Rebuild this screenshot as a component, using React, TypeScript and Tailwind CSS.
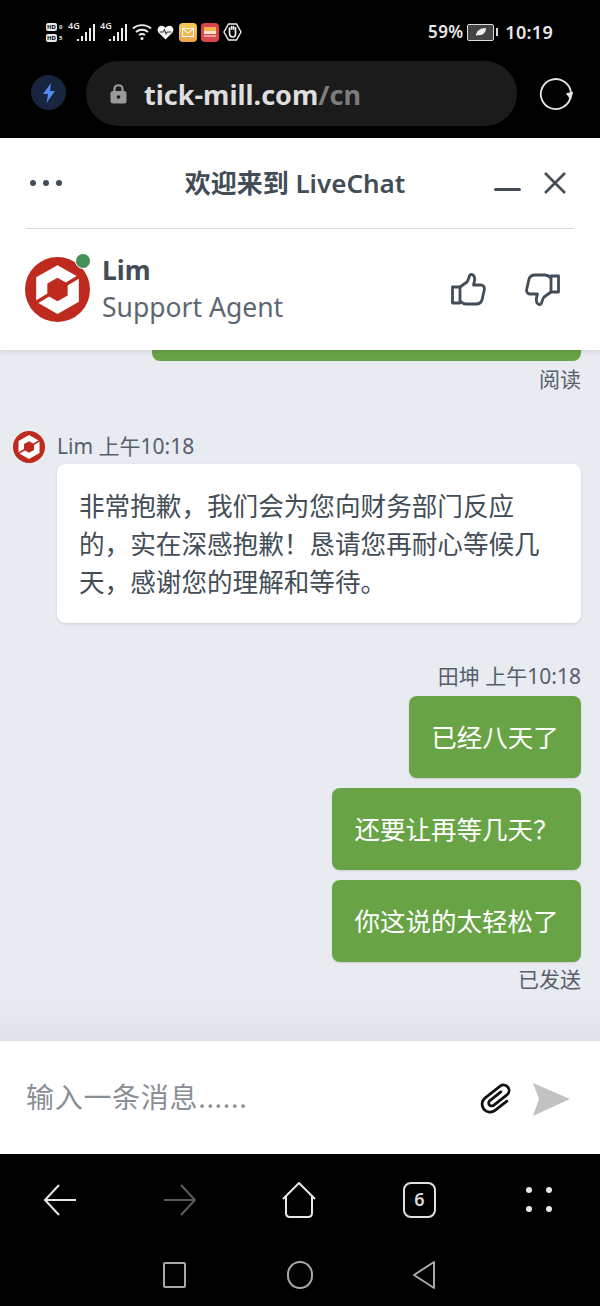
const cjk = "font-['Noto_Sans','Noto_Sans_CJK_SC',sans-serif]"

function Logo({ size }: { size: number }) {
  return (
    <svg width={size} height={size} viewBox="0 0 64 64">
      <circle cx="32" cy="32" r="32" fill="#bf2a1e" />
      <path d="M32 8 L53 20 L53 44 L32 56 L11 44 L11 20 Z" fill="#fff" />
      <path d="M32 20.5 L42 26.2 L42 37.8 L32 43.5 L22 37.8 L22 26.2 Z" fill="#bf2a1e" />
      <path d="M7 47 L32 32 L57 17" fill="none" stroke="#bf2a1e" strokeWidth="3.2" />
    </svg>
  )
}

function HdRow({ n }: { n: string }) {
  return (
    <div className="flex items-center gap-[2px]">
      <span className="flex h-[8px] w-[11px] items-center justify-center rounded-[2px] bg-[#e8e8e8] text-[6px] font-bold leading-none text-black">HD</span>
      <span className="text-[6px] font-bold leading-none">{n}</span>
    </div>
  )
}

function Signal({ className }: { className: string }) {
  return (
    <div className={`relative flex h-[18px] items-end gap-[2px] pl-[9px] ${className}`}>
      <span className="absolute left-0 top-[-2px] text-[9px] font-semibold leading-[10px]">4G</span>
      <div className="h-[2px] w-[2px] bg-[#eee]" />
      <div className="h-[5px] w-[2px] bg-[#eee]" />
      <div className="h-[9px] w-[2px] bg-[#eee]" />
      <div className="h-[13px] w-[2px] bg-[#eee]" />
      <div className="h-[17px] w-[2px] bg-[#eee]" />
    </div>
  )
}

function StatusBar() {
  return (
    <div className="flex h-[61px] items-center justify-between pl-[46px] pr-[47px] pt-[3px] text-[#e8e8e8]">
      <div className="flex items-center">
        <div className="flex w-[19px] flex-col gap-[3px]">
          <HdRow n="0" />
          <HdRow n="5" />
        </div>
        <Signal className="ml-[3px]" />
        <Signal className="ml-[5px]" />
        <svg className="ml-[5px]" width="20" height="18" viewBox="0 0 20 18" fill="none" stroke="#f0f0f0" strokeWidth="1.9">
          <path d="M1 5.5 C6 1 14 1 19 5.5" />
          <path d="M4 9 C7.5 6 12.5 6 16 9" />
          <path d="M7 12 C8.7 10.8 11.3 10.8 13 12" />
          <circle cx="10" cy="15.5" r="1.5" fill="#f0f0f0" stroke="none" />
        </svg>
        <svg className="ml-[5px]" width="17" height="15" viewBox="0 0 18 16">
          <path d="M9 15.5 L1.5 8 C-1 4 2 0.5 5 0.8 C7 1 8 2 9 3 C10 2 11 1 13 0.8 C16 0.5 19 4 16.5 8 Z" fill="#f5f5f5" />
          <path d="M3 7.5 H6.5 L8 5 L9.5 9.5 L11 7.5 H15" fill="none" stroke="#333" strokeWidth="1.1" />
        </svg>
        <div className="ml-[5px] flex h-[19px] w-[18px] items-center justify-center rounded-[4px] bg-gradient-to-b from-[#f5cf55] to-[#e9a64c]">
          <svg width="12" height="9" viewBox="0 0 12 9" fill="none" stroke="#fff" strokeWidth="1">
            <rect x="0.5" y="0.5" width="11" height="8" />
            <path d="M0.5 1 L6 5 L11.5 1" />
          </svg>
        </div>
        <div className="ml-[4px] flex h-[19px] w-[18px] flex-col justify-center rounded-[4px] bg-[#d9474d] px-[3px]">
          <div className="h-[4px] bg-[#f6b352]" />
          <div className="h-[3px] bg-[#fbe6c8]" />
          <div className="mt-[1px] h-[2px] bg-[#f0a09c]" />
        </div>
        <svg className="ml-[4px]" width="19" height="18" viewBox="0 0 19 18">
          <path d="M5.5 1 H13.5 L18 9 L13.5 17 H5.5 L1 9 Z" fill="none" stroke="#f0f0f0" strokeWidth="1.4" />
          <path d="M6.5 7 V5 M8.5 6 V3.7 M10.5 6 V3.7 M12.5 7 V4.7 M6.5 7 V10 C6.5 13 8 14 10 14 C12 14 13 12 12.5 9 V7" fill="none" stroke="#f0f0f0" strokeWidth="1.7" strokeLinecap="round" />
        </svg>
      </div>
      <div className={`flex items-center text-[17px] font-semibold tracking-[0.3px] ${cjk}`}>
        <span>59%</span>
        <div className="ml-[4px] flex h-[17px] w-[27px] items-center justify-center rounded-[2px] border-[1.5px] border-[#dcdcdc] bg-[#444]">
          <svg width="12" height="10" viewBox="0 0 12 10">
            <path d="M1 9 C1 4 5 1 11 1 C11 6 7 9 3 8 Z" fill="#eee" />
          </svg>
        </div>
        <div className="ml-[2px] h-[8px] w-[2px] bg-[#dcdcdc]" />
        <span className="ml-[7px] text-[18px]">10:19</span>
      </div>
    </div>
  )
}

function UrlBar() {
  return (
    <div className="flex h-[77px] items-start">
      <div className="ml-[31px] mt-[14px] flex h-[35px] w-[35px] items-center justify-center rounded-full bg-[#17253f]">
        <svg width="14" height="20" viewBox="0 0 14 20">
          <path d="M9 0 L1 11 H6 L4.5 20 L13 8 H8 Z" fill="#4f8bf0" />
        </svg>
      </div>
      <div className="ml-[20px] flex h-[65px] w-[431px] items-center rounded-full bg-[#1b1b1b] pl-[24px]">
        <svg width="17" height="21" viewBox="0 0 17 21">
          <path d="M4.5 9 V6 C4.5 1 12.5 1 12.5 6 V9" fill="none" stroke="#9a9a9a" strokeWidth="2.2" />
          <rect x="0.5" y="8" width="16" height="12.5" rx="2.5" fill="#9a9a9a" />
          <circle cx="8.5" cy="14" r="1.8" fill="#1b1b1b" />
        </svg>
        <div className="ml-[17px] mt-[2px] text-[27px] font-bold leading-none text-[#dedede]">
          tick-mill.com<span className="text-[#7c7c7c]">/cn</span>
        </div>
      </div>
      <svg className="ml-[22px] mt-[16px]" width="34" height="34" viewBox="0 0 34 34" fill="none" stroke="#e6e6e6" strokeWidth="1.8">
        <path d="M31.5 20 A15 15 0 1 1 25 4.5 C29 7 31.5 11 32 16" />
        <path d="M28.5 17 L33 16 L31.5 21 Z" fill="#e6e6e6" />
      </svg>
    </div>
  )
}

function Header() {
  return (
    <div className="relative z-10 bg-white px-[26px] shadow-[0_1px_6px_rgba(0,0,0,0.12)]">
      <div className="flex h-[91px] items-center justify-between border-b border-[#d5d7da] pb-[1px]">
        <div className="ml-[4px] flex w-[32px] justify-between">
          <div className="h-[6px] w-[6px] rounded-full bg-[#424d57]" />
          <div className="h-[6px] w-[6px] rounded-full bg-[#424d57]" />
          <div className="h-[6px] w-[6px] rounded-full bg-[#424d57]" />
        </div>
        <div className="ml-[34px] mt-[1px] text-[26px] font-semibold text-[#424d57]">欢迎来到 LiveChat</div>
        <div className="flex items-center">
          <div className="mt-[14px] h-[3px] w-[27px] rounded-[2px] bg-[#424d57]" />
          <svg className="ml-[22px] mr-[7px]" width="24" height="24" viewBox="0 0 24 24" fill="none" stroke="#424d57" strokeWidth="2.6">
            <path d="M2 2 L22 22 M22 2 L2 22" />
          </svg>
        </div>
      </div>
      <div className="flex h-[121px] items-center">
        <div className="relative ml-[-1px] mt-[-1px]">
          <Logo size={65} />
          <div className="absolute right-[-1px] top-[-4px] h-[16px] w-[16px] rounded-full border border-white bg-[#44905a]" />
        </div>
        <div className="ml-[12px] mt-[-2px]">
          <div className="text-[26.5px] font-bold leading-[37px] text-[#424d57]">Lim</div>
          <div className="text-[26.5px] leading-[37px] text-[#5d6772]">Support Agent</div>
        </div>
        <div className="ml-auto flex items-center gap-[39px] pr-[14px]">
          <svg width="35" height="33" viewBox="0 0 35 33" fill="none" stroke="#424d57" strokeWidth="2.8" strokeLinejoin="round">
            <path d="M1.5 14 H9 V30 H1.5 Z" />
            <path d="M9 14 L16 9 C18 6 18 3 19 2 C22 0 25 4 23 10 L22.5 12 H30 C33 12 34 15 33 18 L31 27 C30 30 28 31 25 31 H15 C12 31 11 30 9 28" />
          </svg>
          <svg width="35" height="33" viewBox="0 0 35 33" fill="none" stroke="#424d57" strokeWidth="2.8" strokeLinejoin="round">
            <path d="M33.5 19 H26 V3 H33.5 Z" />
            <path d="M26 19 L19 24 C17 27 17 30 16 31 C13 33 10 29 12 23 L12.5 21 H5 C2 21 1 18 2 15 L4 6 C5 3 7 2 10 2 H20 C23 2 24 3 26 5" />
          </svg>
        </div>
      </div>
    </div>
  )
}

function Bubble({ text, width, mt }: { text: string; width: string; mt: string }) {
  return (
    <div className={`flex h-[82px] items-center justify-center rounded-[8px] bg-[#68a445] pt-[1px] text-[25.5px] text-white shadow-[0_1px_2px_rgba(0,0,0,0.12)] ${width} ${mt}`}>
      {text}
    </div>
  )
}

function Chat() {
  return (
    <div className="relative flex h-[691px] flex-col items-stretch overflow-hidden bg-[#e8ebf0] pl-[13px] pr-[19px]">
      <div className="ml-auto h-[11px] w-[429px] rounded-b-[8px] bg-[#68a445]" />
      <div className="mt-[5px] text-right text-[21px] leading-[27px] text-[#56606b]">阅读</div>
      <div className="mt-[37px] flex h-[34px] items-center">
        <Logo size={32} />
        <span className="ml-[12px] text-[21px] text-[#56606b]">Lim 上午10:18</span>
      </div>
      <div className="ml-[44px] h-[159px] rounded-[8px] bg-white pl-[22px] pr-[30px] pt-[24px] text-[25.6px] leading-[38px] text-[#424d57] shadow-[0_1px_3px_rgba(0,0,0,0.12)]">
        非常抱歉，我们会为您向财务部门反应的，实在深感抱歉！恳请您再耐心等候几天，感谢您的理解和等待。
      </div>
      <div className="mt-[40px] text-right text-[21px] leading-[27px] text-[#56606b]">田坤 上午10:18</div>
      <div className="flex flex-col items-end">
        <Bubble text="已经八天了" width="w-[172px]" mt="mt-[6px]" />
        <Bubble text="还要让再等几天？" width="w-[249px]" mt="mt-[10px]" />
        <Bubble text="你这说的太轻松了" width="w-[249px]" mt="mt-[10px]" />
      </div>
      <div className="mt-[4px] text-right text-[21px] leading-[27px] text-[#56606b]">已发送</div>
      <div className="absolute bottom-0 left-0 right-0 h-[44px] bg-gradient-to-b from-transparent to-[#e0e3e8]" />
    </div>
  )
}

function InputBar() {
  return (
    <div className="flex h-[113px] items-center bg-white pl-[26px]">
      <span className="mt-[-2px] text-[28px] tracking-[0.7px] text-[#8a8f96]">输入一条消息......</span>
      <svg className="ml-auto overflow-visible" width="36" height="32" viewBox="0 0 36 32" fill="none" stroke="#111" strokeWidth="2.8" strokeLinecap="round">
        <g transform="rotate(-38 18 16)">
          <path d="M24 13 H10 A3 3 0 0 0 10 19 H27 A5.5 5.5 0 0 0 27 8 H8 A8 8 0 0 0 8 24 H23" />
        </g>
      </svg>
      <svg className="ml-[16px] mr-[30px] mt-[2px]" width="38" height="34" viewBox="0 0 38 34">
        <path d="M1 1 L38 17 L1 34 L7 17 Z" fill="#c2c2c2" />
      </svg>
    </div>
  )
}

function BottomNav() {
  return (
    <div className="h-[152px] bg-black">
      <div className="flex h-[90px] items-center pl-[43px] pt-[1px]">
        <svg width="34" height="32" viewBox="0 0 34 32" fill="none" stroke="#e8e8e8" strokeWidth="2">
          <path d="M2 16 H33 M16 1 L2 16 L16 31" />
        </svg>
        <svg className="ml-[86px]" width="34" height="32" viewBox="0 0 34 32" fill="none" stroke="#5c5c5c" strokeWidth="2">
          <path d="M1 16 H32 M18 1 L32 16 L18 31" />
        </svg>
        <svg className="ml-[85px]" width="34" height="36" viewBox="0 0 34 36" fill="none" stroke="#e8e8e8" strokeWidth="2" strokeLinejoin="round">
          <path d="M1 17 L17 1 L33 17 M4 14 V31 C4 33.5 5.5 35 8 35 H26 C28.5 35 30 33.5 30 31 V14" />
        </svg>
        <div className="ml-[87px] flex h-[36px] w-[33px] items-center justify-center rounded-[8px] border-2 border-[#e0e0e0] text-[18px] font-semibold text-[#dddddd]">6</div>
        <div className="ml-[90px] grid w-[26px] grid-cols-2 gap-x-[14px] gap-y-[13px]">
          <div className="h-[6px] w-[6px] rounded-full bg-[#e8e8e8]" />
          <div className="h-[6px] w-[6px] rounded-full bg-[#e8e8e8]" />
          <div className="h-[6px] w-[6px] rounded-full bg-[#e8e8e8]" />
          <div className="h-[6px] w-[6px] rounded-full bg-[#e8e8e8]" />
        </div>
      </div>
      <div className="flex items-center justify-center pr-[2px] pt-[16px]">
        <div className="h-[26px] w-[23px] rounded-[2px] border-2 border-[#a8a8a8]" />
        <div className="ml-[101px] h-[28px] w-[26px] rounded-full border-2 border-[#a8a8a8]" />
        <svg className="ml-[99px]" width="24" height="30" viewBox="0 0 24 30" fill="none" stroke="#a8a8a8" strokeWidth="2" strokeLinejoin="round">
          <path d="M22 2 V28 L2 15 Z" />
        </svg>
      </div>
    </div>
  )
}

export default function App() {
  return (
    <div className={`h-[1306px] w-[600px] overflow-hidden bg-black ${cjk}`}>
      <StatusBar />
      <UrlBar />
      <Header />
      <Chat />
      <InputBar />
      <BottomNav />
    </div>
  )
}
